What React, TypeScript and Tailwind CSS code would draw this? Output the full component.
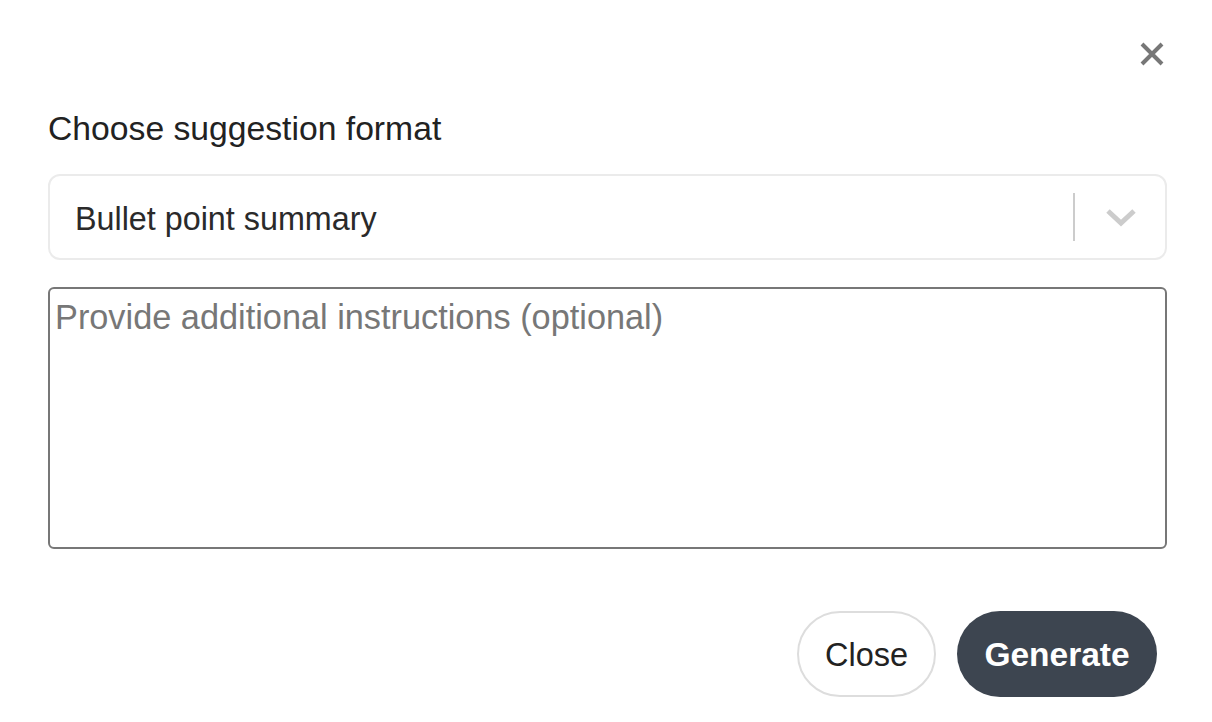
import React from "react";

export default function App() {
  return (
    <div className="w-[1212px] h-[722px] bg-white pl-[48px] pr-[45px] font-['Liberation_Sans',Arial,sans-serif] text-[#222]">
      <div className="h-[108px] flex justify-end items-start pt-[41px] pr-[2px]">
        <button aria-label="Close" className="w-[26px] h-[26px] flex items-center justify-center">
          <svg width="26" height="26" viewBox="0 0 26 26" fill="none">
            <path d="M3 3 L23 23 M23 3 L3 23" stroke="#777" strokeWidth="4" strokeLinecap="butt" />
          </svg>
        </button>
      </div>
      <div className="h-[40px] leading-[40px] text-[33.7px] text-[#222]">Choose suggestion format</div>
      <div className="mt-[26px] h-[86px] border-2 border-[#ebebeb] rounded-[12px] flex items-center">
        <div className="flex-1 pl-[25px] pt-[4px] text-[32.3px] text-[#2a2a2a]">Bullet point summary</div>
        <div className="w-[2px] h-[48px] bg-[#cccccc]" />
        <div className="w-[90px] flex items-center justify-center pl-[2px]">
          <svg width="32" height="20" viewBox="0 0 32 20" fill="none">
            <path d="M3 4 L16 16 L29 4" stroke="#cccccc" strokeWidth="5" strokeLinecap="butt" strokeLinejoin="miter" />
          </svg>
        </div>
      </div>
      <textarea
        placeholder="Provide additional instructions (optional)"
        className="mt-[27px] block w-full h-[262px] border-2 border-[#777] rounded-[6px] px-[5px] pt-[8px] text-[34.3px] leading-[40px] placeholder:text-[#777] resize-none outline-none font-['Liberation_Sans',Arial,sans-serif]"
      />
      <div className="mt-[62px] flex justify-end gap-[21px] pr-[10px]">
        <button className="w-[139px] h-[86px] rounded-full border-2 border-[#dddddd] bg-white text-[32.5px] text-[#222] pt-[2px]">
          Close
        </button>
        <button className="w-[200px] h-[86px] rounded-full bg-[#3d4550] text-white font-bold text-[33.5px] pt-[2px]">
          Generate
        </button>
      </div>
    </div>
  );
}
